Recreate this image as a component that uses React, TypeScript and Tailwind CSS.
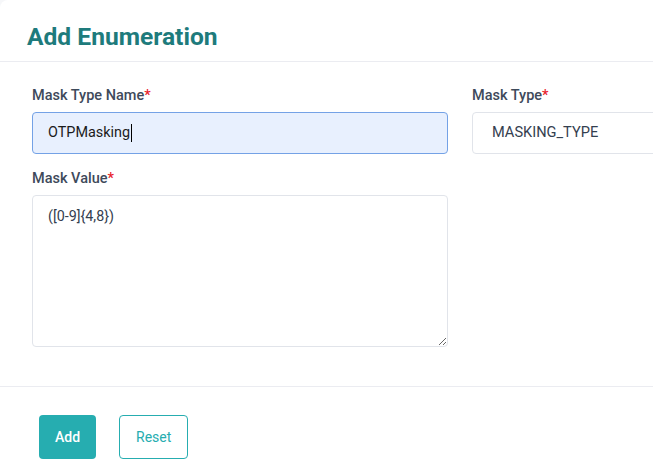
import React from "react";

function Label({ text }: { text: string }) {
  return (
    <div className="text-[14.5px] leading-[20px] font-medium text-[#3e4a5b] mb-[6px]">
      {text}
      <span className="text-[#e8232d]">*</span>
    </div>
  );
}

export default function App() {
  return (
    <div
      className="w-[653px] h-[471px] overflow-hidden bg-[#f6f7f9]"
      style={{ fontFamily: "Roboto, 'Liberation Sans', sans-serif" }}
    >
      <div className="w-[980px] h-[520px] bg-white rounded-tl-[8px]">
        <div className="h-[62px] pl-[27px] flex items-center border-b border-[#ebecf1]">
          <h1 className="text-[24.6px] leading-[30px] font-bold text-[#1e7b7c] pt-[12px]">
            Add Enumeration
          </h1>
        </div>
        <div className="px-8 pt-[24px] pb-[39px] border-b border-[#ebecf1] grid grid-cols-[416px_416px] gap-x-6">
          <div>
            <Label text="Mask Type Name" />
            <div className="h-[42px] rounded-[4px] border border-[#74a2e6] bg-[#e8f0fe] pl-[15px] flex items-center text-[14.4px] text-[#1b1b1b]">
              <span>OTPMasking</span>
              <span className="inline-block w-[1px] h-[18px] bg-black ml-[1px]" />
            </div>
          </div>
          <div>
            <Label text="Mask Type" />
            <div className="h-[42px] rounded-[4px] border border-[#e1e4ea] bg-white pl-[19px] flex items-center text-[14.6px] text-[#34404f]">
              MASKING_TYPE
            </div>
          </div>
          <div className="mt-[15px]">
            <Label text="Mask Value" />
            <textarea
              defaultValue="([0-9]{4,8})"
              className="block w-full h-[152px] rounded-[4px] border border-[#e1e4ea] bg-white pl-[15px] pt-[10px] text-[14.3px] leading-[20px] text-[#34404f] outline-none"
              style={{ fontFamily: "Roboto, 'Liberation Sans', sans-serif" }}
            />
          </div>
        </div>
        <div className="pl-[39px] pt-[28px] flex gap-[23px]">
          <button className="h-[44px] px-[16px] rounded-[4px] bg-[#26adb0] text-white text-[14px] font-medium">
            Add
          </button>
          <button className="h-[44px] px-[16px] rounded-[4px] border border-[#26adb0] bg-white text-[#26adb0] text-[14px]">
            Reset
          </button>
        </div>
      </div>
    </div>
  );
}
